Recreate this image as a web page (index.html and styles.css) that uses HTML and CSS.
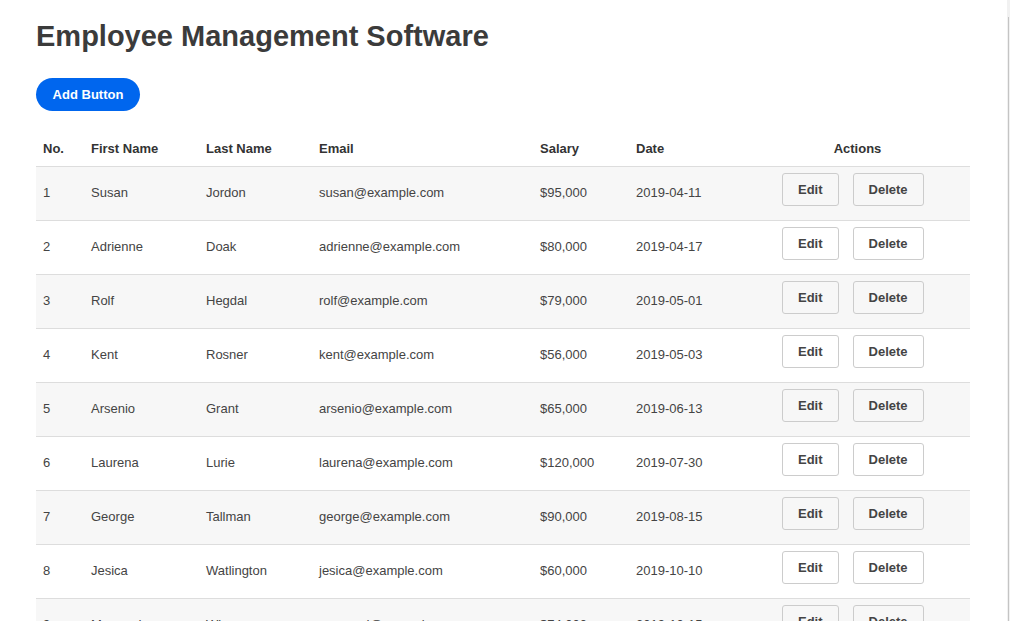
FILE: index.html
```html
<!DOCTYPE html>
<html lang="en">
<head>
<meta charset="utf-8">
<title>Employee Management Software</title>
<link rel="stylesheet" href="styles.css">
</head>
<body>
<div class="page">
  <h1 class="title">Employee Management Software</h1>
  <button class="add-btn">Add Button</button>
  <table class="emp-table">
    <colgroup>
      <col class="c-no"><col class="c-first"><col class="c-last"><col class="c-email"><col class="c-salary"><col class="c-date"><col class="c-actions">
    </colgroup>
    <thead>
      <tr>
        <th>No.</th><th>First Name</th><th>Last Name</th><th>Email</th><th>Salary</th><th>Date</th><th class="th-actions">Actions</th>
      </tr>
    </thead>
    <tbody>
      <tr><td>1</td><td>Susan</td><td>Jordon</td><td>susan@example.com</td><td>$95,000</td><td>2019-04-11</td><td class="td-actions"><div class="actions"><button class="btn">Edit</button><button class="btn">Delete</button></div></td></tr>
      <tr><td>2</td><td>Adrienne</td><td>Doak</td><td>adrienne@example.com</td><td>$80,000</td><td>2019-04-17</td><td class="td-actions"><div class="actions"><button class="btn">Edit</button><button class="btn">Delete</button></div></td></tr>
      <tr><td>3</td><td>Rolf</td><td>Hegdal</td><td>rolf@example.com</td><td>$79,000</td><td>2019-05-01</td><td class="td-actions"><div class="actions"><button class="btn">Edit</button><button class="btn">Delete</button></div></td></tr>
      <tr><td>4</td><td>Kent</td><td>Rosner</td><td>kent@example.com</td><td>$56,000</td><td>2019-05-03</td><td class="td-actions"><div class="actions"><button class="btn">Edit</button><button class="btn">Delete</button></div></td></tr>
      <tr><td>5</td><td>Arsenio</td><td>Grant</td><td>arsenio@example.com</td><td>$65,000</td><td>2019-06-13</td><td class="td-actions"><div class="actions"><button class="btn">Edit</button><button class="btn">Delete</button></div></td></tr>
      <tr><td>6</td><td>Laurena</td><td>Lurie</td><td>laurena@example.com</td><td>$120,000</td><td>2019-07-30</td><td class="td-actions"><div class="actions"><button class="btn">Edit</button><button class="btn">Delete</button></div></td></tr>
      <tr><td>7</td><td>George</td><td>Tallman</td><td>george@example.com</td><td>$90,000</td><td>2019-08-15</td><td class="td-actions"><div class="actions"><button class="btn">Edit</button><button class="btn">Delete</button></div></td></tr>
      <tr><td>8</td><td>Jesica</td><td>Watlington</td><td>jesica@example.com</td><td>$60,000</td><td>2019-10-10</td><td class="td-actions"><div class="actions"><button class="btn">Edit</button><button class="btn">Delete</button></div></td></tr>
      <tr><td>9</td><td>Maynard</td><td>Wiseman</td><td>maynard@example.com</td><td>$74,000</td><td>2019-10-15</td><td class="td-actions"><div class="actions"><button class="btn">Edit</button><button class="btn">Delete</button></div></td></tr>
      <tr><td>10</td><td>Nina</td><td>Carter</td><td>nina@example.com</td><td>$70,000</td><td>2019-11-02</td><td class="td-actions"><div class="actions"><button class="btn">Edit</button><button class="btn">Delete</button></div></td></tr>
    </tbody>
  </table>
</div>
<div class="scrollbar"><div class="scroll-thumb"></div></div>
</body>
</html>
```
FILE: styles.css
```css
html, body {
  margin: 0;
  padding: 0;
  background: #ffffff;
}

body {
  font-family: "Liberation Sans", Arial, sans-serif;
  font-size: 13px;
  color: #444444;
}

.page {
  padding: 20px 36px 40px;
}

.title {
  margin: 0;
  font-size: 29px;
  font-weight: bold;
  line-height: 33px;
  color: #3b3b3b;
}

.add-btn {
  display: block;
  margin-top: 25px;
  height: 33px;
  width: 104px;
  padding: 0;
  border: none;
  border-radius: 17px;
  background: #0066ee;
  color: #ffffff;
  font-family: "Liberation Sans", Arial, sans-serif;
  font-size: 13px;
  font-weight: bold;
}

.emp-table {
  margin-top: 19px;
  width: 934px;
  table-layout: fixed;
  border-collapse: separate;
  border-spacing: 0;
}

.c-no { width: 48px; }
.c-first { width: 115px; }
.c-last { width: 113px; }
.c-email { width: 221px; }
.c-salary { width: 96px; }
.c-date { width: 116px; }
.c-actions { width: 225px; }

.emp-table th {
  text-align: left;
  font-weight: bold;
  color: #333333;
  line-height: 35px;
  padding: 1px 7px 0;
  border-bottom: 1px solid #dddddd;
  white-space: nowrap;
}

.emp-table th.th-actions {
  text-align: center;
}

.emp-table td {
  line-height: 52px;
  padding: 0 7px 1px;
  border-bottom: 1px solid #dddddd;
  white-space: nowrap;
  vertical-align: top;
}

.emp-table tbody tr:nth-child(odd) td {
  background: #f7f7f7;
}

.emp-table td.td-actions {
  padding: 0 0 0 37px;
}

.actions {
  display: flex;
  gap: 14px;
  align-items: flex-start;
  height: 53px;
  padding-top: 6px;
  box-sizing: border-box;
  line-height: normal;
}

.btn {
  height: 33px;
  padding: 0 15px;
  border: 1px solid #cccccc;
  border-radius: 3px;
  background: transparent;
  color: #444444;
  font-family: "Liberation Sans", Arial, sans-serif;
  font-size: 13px;
  font-weight: bold;
}

.scrollbar {
  position: fixed;
  top: 0;
  right: 0;
  width: 3px;
  height: 100%;
  background: #f1f1f1;
}

.scroll-thumb {
  margin-top: 17px;
  width: 1px;
  height: 100%;
  background: #c4c4c4;
  margin-left: 1px;
}
```
